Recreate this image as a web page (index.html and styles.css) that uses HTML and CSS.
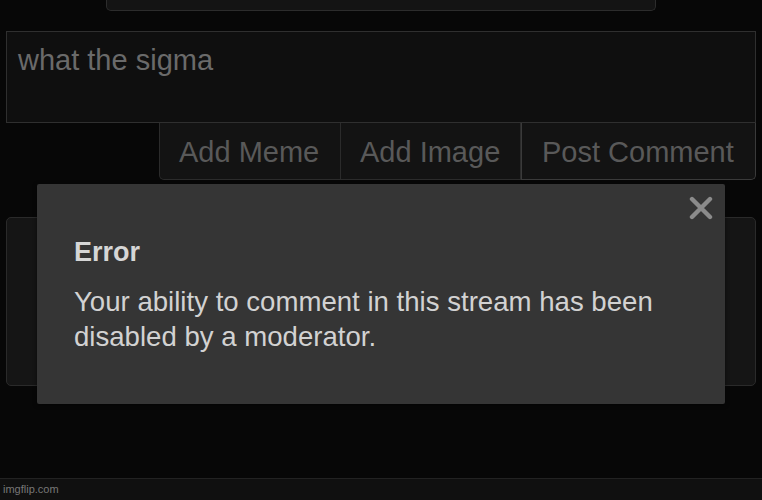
FILE: index.html
```html
<!DOCTYPE html>
<html>
<head>
<meta charset="utf-8">
<link rel="stylesheet" href="styles.css">
</head>
<body>
<div class="page">
  <div class="prev-box"></div>
  <div class="composer">
    <div class="input">what the sigma</div>
    <div class="actions">
      <div class="btn">Add Meme</div>
      <div class="btn">Add Image</div>
      <div class="btn btn-post">Post Comment</div>
    </div>
  </div>
  <div class="comment-box"></div>
  <div class="footer">imgflip.com</div>

  <div class="modal">
    <svg class="close" width="24" height="24" viewBox="0 0 24 24">
      <path d="M3 3 L21 21 M21 3 L3 21" stroke="#8b8b8b" stroke-width="4.4" stroke-linecap="round" fill="none"/>
    </svg>
    <div class="modal-title">Error</div>
    <div class="modal-body">Your ability to comment in this stream has been disabled by a moderator.</div>
  </div>
</div>
</body>
</html>
```

FILE: styles.css
```css
html, body {
  margin: 0;
  padding: 0;
  background: #070707;
}
body {
  font-family: "Liberation Sans", Arial, sans-serif;
}
.page {
  position: relative;
  width: 762px;
  height: 500px;
  display: flex;
  flex-direction: column;
  overflow: hidden;
}
.prev-box {
  margin-left: 106px;
  width: 548px;
  height: 10px;
  background: #141414;
  border: 1px solid #2c2c2c;
  border-top: none;
  border-radius: 0 0 5px 5px;
}
.composer {
  margin-top: 20px;
  margin-left: 6px;
  width: 750px;
  display: flex;
  flex-direction: column;
}
.input {
  height: 79px;
  padding: 11px 11px 0 11px;
  background: #0f0f0f;
  border: 1px solid #2f2f2f;
  font-size: 29px;
  line-height: 35px;
  color: #6a6a6a;
}
.actions {
  display: flex;
  justify-content: flex-end;
}
.btn {
  box-sizing: border-box;
  height: 57px;
  padding: 12px 19px 0 19px;
  background: #131313;
  border: 1px solid #2b2b2b;
  border-top: none;
  border-left: none;
  font-size: 29px;
  line-height: 35px;
  color: #595959;
  white-space: nowrap;
}
.btn:first-child {
  border-left: 1px solid #2b2b2b;
  border-bottom-left-radius: 5px;
  width: 182px;
}
.btn:nth-child(2) {
  width: 180px;
}
.btn-post {
  width: 235px;
  border: 1px solid #3a3a3a;
  border-top: none;
  border-bottom-right-radius: 5px;
  padding-left: 20px;
}
.comment-box {
  margin-top: 37px;
  margin-left: 6px;
  width: 748px;
  height: 167px;
  background: #151515;
  border: 1px solid #2a2a2a;
  border-radius: 5px;
}
.footer {
  margin-top: auto;
  height: 21px;
  background: #101010;
  border-top: 1px solid #222;
  padding-left: 3px;
  font-size: 11px;
  line-height: 21px;
  color: #777;
}
.modal {
  position: absolute;
  left: 37px;
  top: 184px;
  width: 651px;
  height: 169px;
  padding: 51px 0 0 37px;
  background: #353535;
  border-radius: 2px;
  box-shadow: 0 1px 4px rgba(0,0,0,0.5);
}
.close {
  position: absolute;
  right: 12px;
  top: 12px;
}
.modal-title {
  font-size: 27px;
  line-height: 35px;
  font-weight: bold;
  color: #d6d6d6;
}
.modal-body {
  margin-top: 14px;
  width: 610px;
  font-size: 27.6px;
  line-height: 35px;
  color: #d2d2d2;
}
```
